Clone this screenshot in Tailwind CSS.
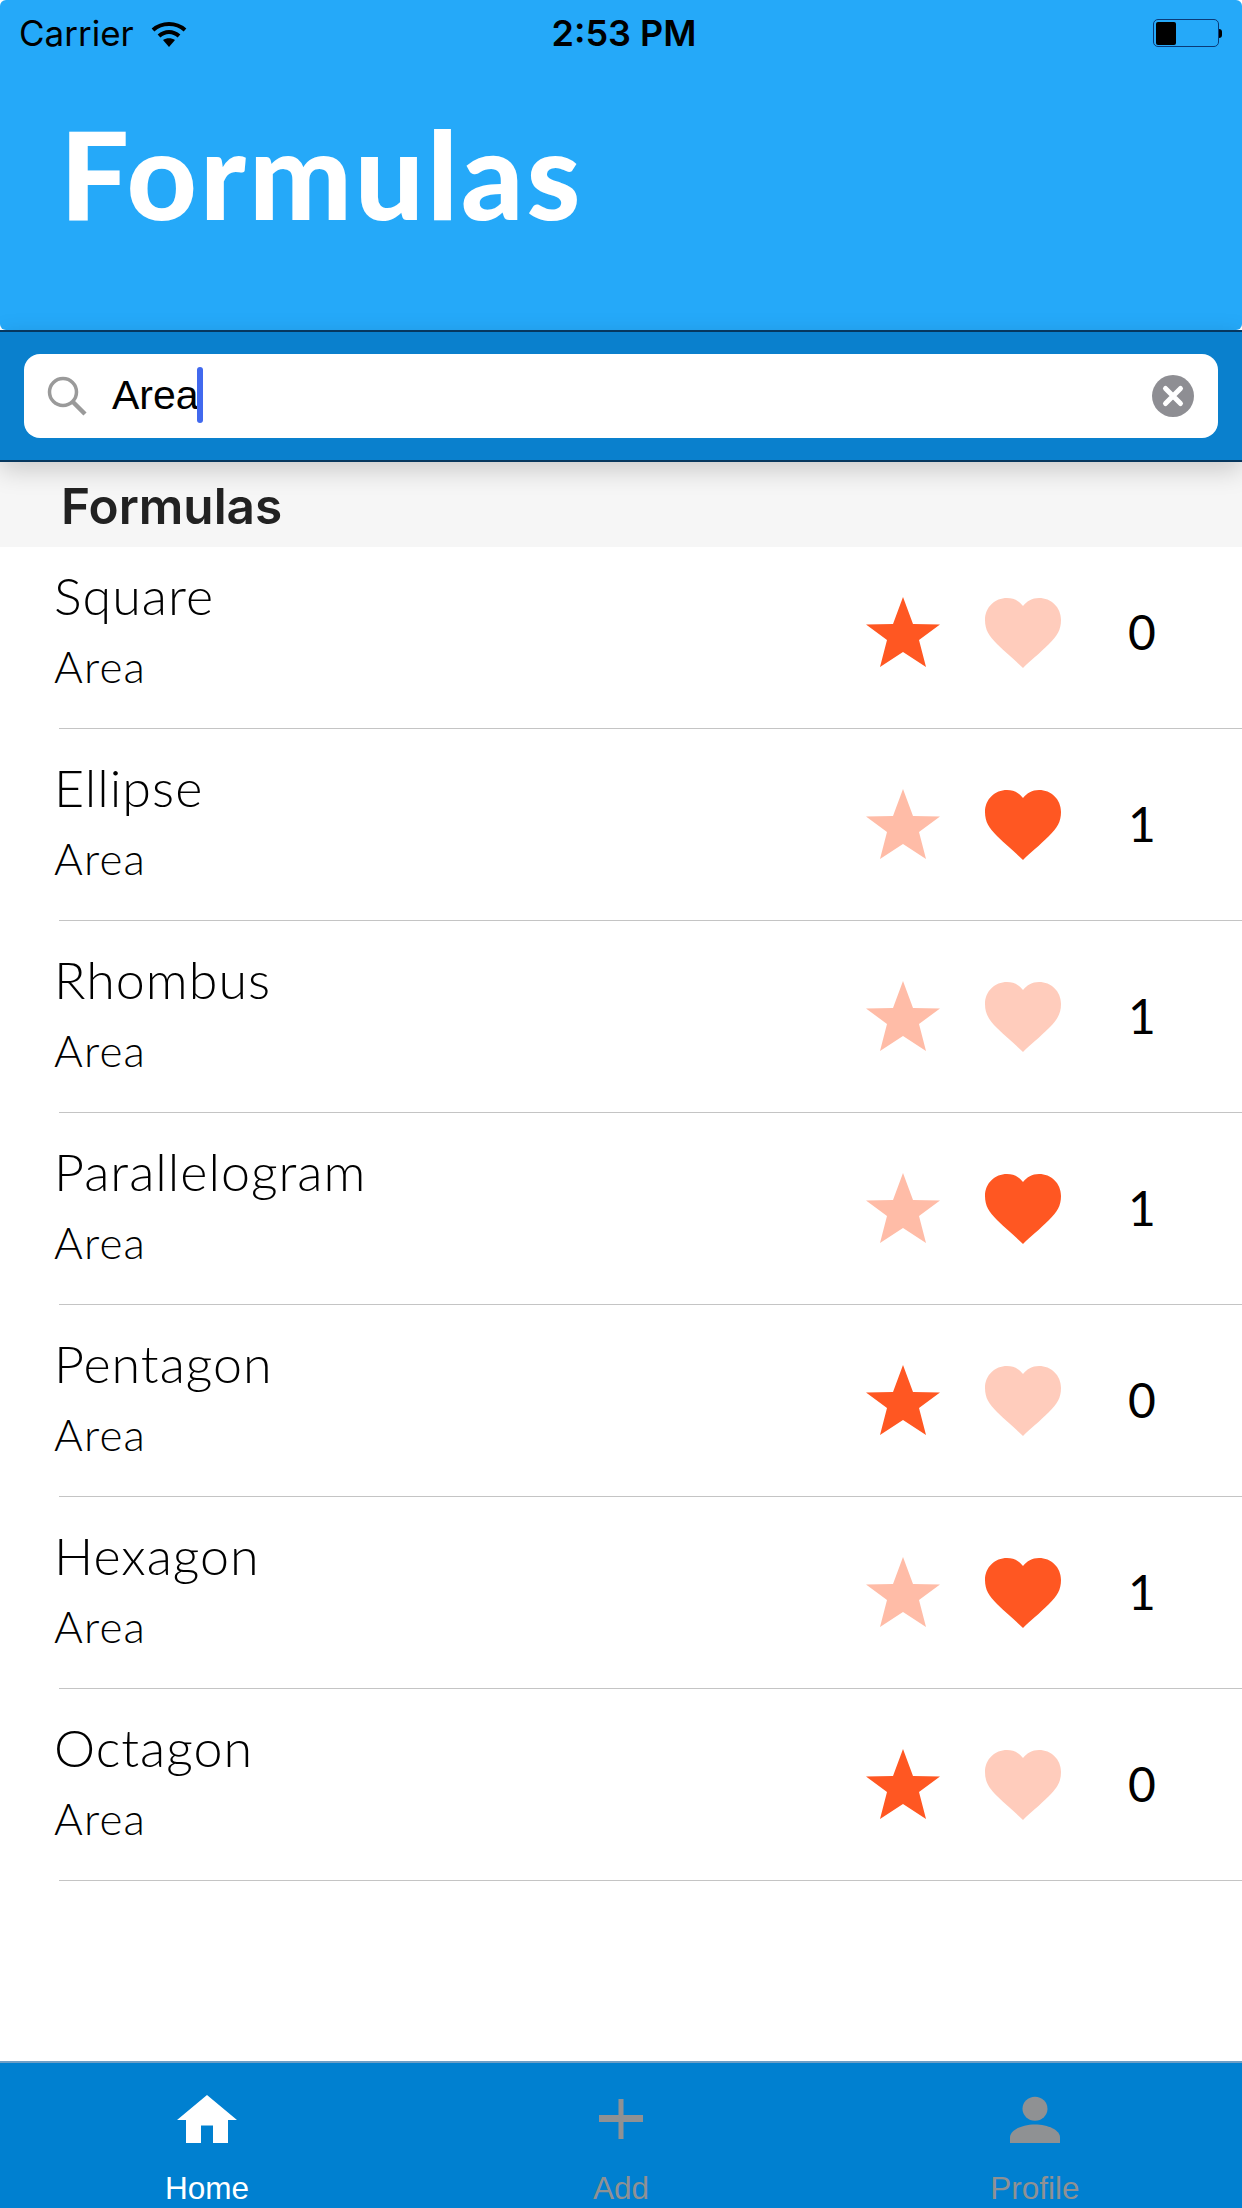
<!DOCTYPE html>
<html>
<head>
<meta charset="utf-8">
<script src="https://cdn.jsdelivr.net/npm/@tailwindcss/browser@4"></script>
</head>
<body class="m-0 bg-white">
<svg width="0" height="0" class="absolute">
  <defs>
    <path id="star" d="M37 0 L47 27 L74 27.500 L53 43 L60 70 L37 55 L14 70 L21 43 L0 27.500 L27 27 Z"/>
    <path id="heart" d="M38 70 C30 62 22 56 12 46 C4 38 0 32 0 22 C0 9 10 0 22 0 C29 0 34 3 38 8 C42 3 47 0 54 0 C66 0 76 9 76 22 C76 32 72 38 64 46 C54 56 46 62 38 70 Z"/>
  </defs>
</svg>
<div class="w-[1242px] h-[2208px] flex flex-col overflow-hidden bg-white font-['Lato',sans-serif] text-black">
  <header class="h-[330px] shrink-0 bg-[#25a9f9] rounded-[6px] flex flex-col">
    <div class="h-[66px] px-[19px] grid grid-cols-3 items-center font-['Inter',sans-serif] text-[33px] leading-none">
      <div class="flex items-center gap-[17px]">
        <span class="text-[35px]">Carrier</span>
        <svg width="36" height="27" viewBox="0 0 36 27"><path d="M18 27 L12 20 C15.500 17.500 20.500 17.500 24 20 Z" fill="#000"/><path d="M2 10 C11 2 25 2 34 10" stroke="#000" stroke-width="4" fill="none"/><path d="M8 16 C14 10.500 22 10.500 28 16" stroke="#000" stroke-width="4" fill="none"/></svg>
      </div>
      <div class="text-center font-semibold text-[36px] whitespace-nowrap translate-x-[3px]">2:53 PM</div>
      <div class="flex justify-end items-center pr-[1px]">
        <div class="w-[66px] h-[28px] rounded-[5px] border-[1.500px] border-[#0a3a78] p-[1.500px]"><div class="w-[20px] h-full bg-black rounded-[2px]"></div></div>
        <div class="w-[3px] h-[9px] bg-black rounded-r-[3px]"></div>
      </div>
    </div>
    <h1 class="pl-[60px] pt-[43px] font-black text-[122px] leading-[128px] text-white tracking-[3px]">Formulas</h1>
  </header>

  <div class="relative z-20 h-[132px] shrink-0 bg-[#0a80cd] border-y-2 border-[#06375e] px-[24px] flex items-center shadow-[0_8px_24px_rgba(0,0,0,0.18)]">
    <div class="w-full h-[84px] bg-white rounded-[16px] flex items-center pl-[23px] pr-[24px]">
      <svg width="40" height="40" viewBox="0 0 40 40" class="shrink-0"><circle cx="16" cy="16" r="13.500" fill="none" stroke="#9a9a9a" stroke-width="3.500"/><path d="M26 26 L38 38" stroke="#9a9a9a" stroke-width="4.500"/></svg>
      <div class="ml-[25px] -mt-[2px] flex items-center font-['Liberation_Sans',sans-serif] text-[41px] leading-none">Area<span class="w-[6px] h-[56px] bg-[#4169ee] rounded-[3px] -ml-[2px]"></span></div>
      <svg width="42" height="42" viewBox="0 0 42 42" class="ml-auto shrink-0"><circle cx="21" cy="21" r="21" fill="#8e8e93"/><path d="M13.500 13.500 L28.500 28.500 M28.500 13.500 L13.500 28.500" stroke="#fff" stroke-width="5" stroke-linecap="round"/></svg>
    </div>
  </div>

  <div class="relative z-10 h-[85px] shrink-0 bg-[#f6f6f6] pl-[61px] pt-[3px] flex items-center font-['Inter',sans-serif] font-semibold text-[49.500px] text-[#222]">Formulas</div>

  <div class="flex-1 -mt-[10px]">
    <!-- rows -->
    <div class="relative h-[192px] pl-[54px] pr-[19px] flex items-center"><div class="flex-1 -mt-[9px]"><div class="text-[52px] leading-[58px] font-light tracking-[1px]">Square</div><div class="text-[44px] leading-[52px] mt-[16px] font-light tracking-[1.2px]">Area</div></div><svg width="76" height="72" viewBox="0 0 76 72" fill="#ff5722"><use href="#star"/></svg><svg width="76" height="72" viewBox="0 0 76 72" class="ml-[43px] mt-[2px]" fill="#ff5722" fill-opacity="0.3"><use href="#heart"/></svg><div class="w-[162px] -mt-[3px] text-center text-[48px]">0</div><div class="absolute left-[59px] right-0 bottom-0 h-px bg-[#c4c4c4]"></div></div>
    <div class="relative h-[192px] pl-[54px] pr-[19px] flex items-center"><div class="flex-1 -mt-[9px]"><div class="text-[52px] leading-[58px] font-light tracking-[1px]">Ellipse</div><div class="text-[44px] leading-[52px] mt-[16px] font-light tracking-[1.2px]">Area</div></div><svg width="76" height="72" viewBox="0 0 76 72" fill="#ff5722" fill-opacity="0.4"><use href="#star"/></svg><svg width="76" height="72" viewBox="0 0 76 72" class="ml-[43px] mt-[2px]" fill="#ff5722"><use href="#heart"/></svg><div class="w-[162px] -mt-[3px] text-center text-[48px]">1</div><div class="absolute left-[59px] right-0 bottom-0 h-px bg-[#c4c4c4]"></div></div>
    <div class="relative h-[192px] pl-[54px] pr-[19px] flex items-center"><div class="flex-1 -mt-[9px]"><div class="text-[52px] leading-[58px] font-light tracking-[1px]">Rhombus</div><div class="text-[44px] leading-[52px] mt-[16px] font-light tracking-[1.2px]">Area</div></div><svg width="76" height="72" viewBox="0 0 76 72" fill="#ff5722" fill-opacity="0.4"><use href="#star"/></svg><svg width="76" height="72" viewBox="0 0 76 72" class="ml-[43px] mt-[2px]" fill="#ff5722" fill-opacity="0.3"><use href="#heart"/></svg><div class="w-[162px] -mt-[3px] text-center text-[48px]">1</div><div class="absolute left-[59px] right-0 bottom-0 h-px bg-[#c4c4c4]"></div></div>
    <div class="relative h-[192px] pl-[54px] pr-[19px] flex items-center"><div class="flex-1 -mt-[9px]"><div class="text-[52px] leading-[58px] font-light tracking-[1px]">Parallelogram</div><div class="text-[44px] leading-[52px] mt-[16px] font-light tracking-[1.2px]">Area</div></div><svg width="76" height="72" viewBox="0 0 76 72" fill="#ff5722" fill-opacity="0.4"><use href="#star"/></svg><svg width="76" height="72" viewBox="0 0 76 72" class="ml-[43px] mt-[2px]" fill="#ff5722"><use href="#heart"/></svg><div class="w-[162px] -mt-[3px] text-center text-[48px]">1</div><div class="absolute left-[59px] right-0 bottom-0 h-px bg-[#c4c4c4]"></div></div>
    <div class="relative h-[192px] pl-[54px] pr-[19px] flex items-center"><div class="flex-1 -mt-[9px]"><div class="text-[52px] leading-[58px] font-light tracking-[1px]">Pentagon</div><div class="text-[44px] leading-[52px] mt-[16px] font-light tracking-[1.2px]">Area</div></div><svg width="76" height="72" viewBox="0 0 76 72" fill="#ff5722"><use href="#star"/></svg><svg width="76" height="72" viewBox="0 0 76 72" class="ml-[43px] mt-[2px]" fill="#ff5722" fill-opacity="0.3"><use href="#heart"/></svg><div class="w-[162px] -mt-[3px] text-center text-[48px]">0</div><div class="absolute left-[59px] right-0 bottom-0 h-px bg-[#c4c4c4]"></div></div>
    <div class="relative h-[192px] pl-[54px] pr-[19px] flex items-center"><div class="flex-1 -mt-[9px]"><div class="text-[52px] leading-[58px] font-light tracking-[1px]">Hexagon</div><div class="text-[44px] leading-[52px] mt-[16px] font-light tracking-[1.2px]">Area</div></div><svg width="76" height="72" viewBox="0 0 76 72" fill="#ff5722" fill-opacity="0.4"><use href="#star"/></svg><svg width="76" height="72" viewBox="0 0 76 72" class="ml-[43px] mt-[2px]" fill="#ff5722"><use href="#heart"/></svg><div class="w-[162px] -mt-[3px] text-center text-[48px]">1</div><div class="absolute left-[59px] right-0 bottom-0 h-px bg-[#c4c4c4]"></div></div>
    <div class="relative h-[192px] pl-[54px] pr-[19px] flex items-center"><div class="flex-1 -mt-[9px]"><div class="text-[52px] leading-[58px] font-light tracking-[1px]">Octagon</div><div class="text-[44px] leading-[52px] mt-[16px] font-light tracking-[1.2px]">Area</div></div><svg width="76" height="72" viewBox="0 0 76 72" fill="#ff5722"><use href="#star"/></svg><svg width="76" height="72" viewBox="0 0 76 72" class="ml-[43px] mt-[2px]" fill="#ff5722" fill-opacity="0.3"><use href="#heart"/></svg><div class="w-[162px] -mt-[3px] text-center text-[48px]">0</div><div class="absolute left-[59px] right-0 bottom-0 h-px bg-[#c4c4c4]"></div></div>
  </div>

  <nav class="h-[147px] shrink-0 bg-[#0080d0] border-t-2 border-[#6f9fc6] grid grid-cols-3 font-['Liberation_Sans',sans-serif] text-[31.500px] leading-none">
    <div class="flex flex-col items-center pt-[32px] text-white">
      <svg width="60" height="48" viewBox="0 0 60 52" preserveAspectRatio="none" fill="#fff"><path d="M30 0 L60 27 L51 27 L51 52 L36 52 L36 33 L24 33 L24 52 L9 52 L9 27 L0 27 Z"/></svg>
      <span class="mt-[30px]">Home</span>
    </div>
    <div class="flex flex-col items-center pt-[32px] text-[#8f9193]">
      <svg width="44" height="48" viewBox="0 0 44 48" fill="#8f9193"><path d="M19.500 4 H24.500 V20 H44 V27 H24.500 V44 H19.500 V27 H0 V20 H19.500 Z"/></svg>
      <span class="mt-[30px]">Add</span>
    </div>
    <div class="flex flex-col items-center pt-[32px] text-[#8f9193]">
      <svg width="50" height="48" viewBox="0 0 50 52" preserveAspectRatio="none" fill="#8f9193"><ellipse cx="25" cy="15" rx="12.500" ry="13"/><path d="M0 52 V46 C0 38 12 32 25 32 C38 32 50 38 50 46 V52 Z"/></svg>
      <span class="mt-[30px]">Profile</span>
    </div>
  </nav>
</div>
</body>
</html>
